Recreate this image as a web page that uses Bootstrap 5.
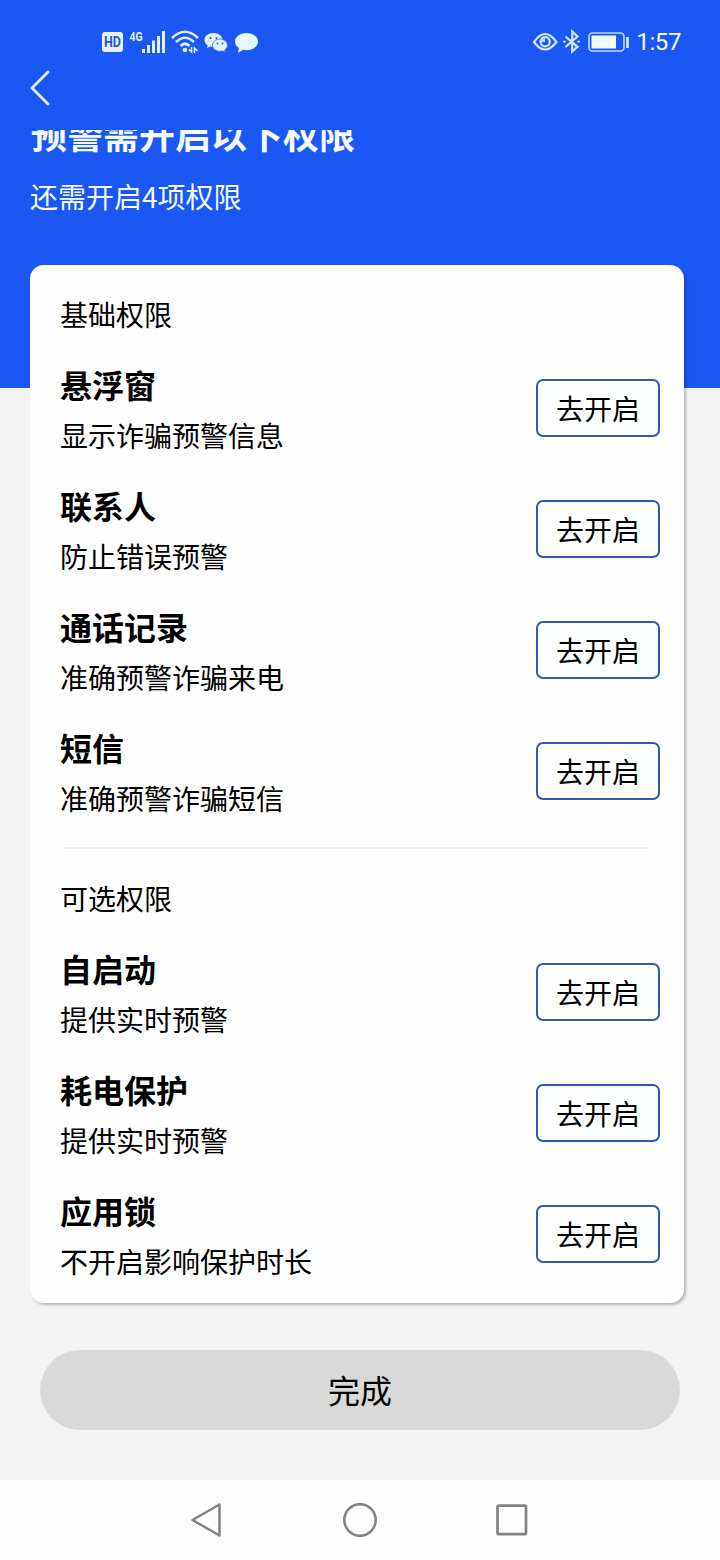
<!DOCTYPE html>
<html lang="zh-CN">
<head>
<meta charset="utf-8">
<meta name="viewport" content="width=device-width, initial-scale=1">
<title>预警权限</title>
<link href="https://cdn.jsdelivr.net/npm/bootstrap@5.3.0/dist/css/bootstrap.min.css" rel="stylesheet">
<style>
  body { font-family: "Noto Sans CJK SC", sans-serif; background: #f3f3f4; color: #000; width: 720px; height: 1560px; }
  .hero { background: #1b57f5; height: 388px; color: #f4fcff; }
  .status { height: 60px; padding: 30px 39px 0 101px; }
  .status svg { display: block; flex: none; overflow: visible; }
  .clock { font: 24px/25px Roboto, sans-serif; letter-spacing: -.4px; margin-left: 5px; }
  .back { height: 70px; padding: 9px 0 0 28px; }
  .back svg { display: block; }
  .headline-clip { height: 32px; margin-left: 31px; overflow: hidden; }
  .headline { font-size: 36px; line-height: 48px; font-weight: 700; margin: -21px 0 0; }
  .remaining { font-size: 28px; line-height: 42px; margin: 13px 0 0 30px; }
  .panel { margin: -123px 36px 0 30px; height: 1038px; padding: 28px 24px 8px 30px; border: 0; border-radius: 14px; box-shadow: 2px 2px 3px rgba(0,0,0,.25); background: #fefefe; }
  .group-name { font-size: 28px; line-height: 42px; margin: 0 0 13px; }
  .perm { height: 121px; }
  .perm-text { padding-top: 12px; }
  .perm h2 { font-size: 32px; line-height: 48px; font-weight: 700; margin: 0 0 6px; }
  .perm p { font-size: 28px; line-height: 42px; margin: 0; }
  .btn-open { width: 124px; height: 58px; margin-top: 31px; padding: 0; border: 2px solid #3559ae; border-radius: 7px; background: #fdffff; color: #000; font-size: 28px; line-height: 55px; }
  .rule { height: 2px; margin: 15px 12px 28px 4px; background: #f0f0f0; }
  .btn-done { margin: 47px 40px 0; height: 80px; border: 0; border-radius: 40px; background: #d9d9d9; color: #000; font-size: 32px; line-height: 78px; padding: 0 0 2px; }
  .sysnav { margin-top: 50px; height: 80px; background: #fdfdfd; padding-left: 189px; gap: 116px; }
</style>
</head>
<body class="d-flex flex-column overflow-hidden">
<header class="hero flex-shrink-0">
  <div class="status d-flex">
    <svg width="27" height="24"><rect x="1" y="2" width="21" height="20" rx="3" fill="#e4f3ff"/><text x="11.5" y="17.2" text-anchor="middle" font-family="Roboto" font-weight="700" font-size="14" textLength="17" lengthAdjust="spacingAndGlyphs" fill="#2b56c8">HD</text></svg>
    <svg width="41" height="24" fill="#dff1ff"><text x="1.5" y="10.500" font-family="Roboto" font-weight="700" font-size="13" textLength="13" lengthAdjust="spacingAndGlyphs">4G</text><path d="M14 19h3v4h-3zM19 15h3v8h-3zM24 10.500h3v12.500h-3zM29 6h3v17h-3zM34 1h3v22h-3z"/></svg>
    <svg width="34" height="24" fill="none" stroke="#dff1ff" stroke-width="2.600"><path d="M3 8Q16-4.500 29 8M7 12Q16 3.500 25 12M11.500 16Q16 11.500 20.500 16"/><circle cx="16" cy="20" r="2.300" fill="#dff1ff" stroke="none"/><path d="M20 19.500l2.500 2.500V17M25.500 23v-5l3 3" stroke-width="1.500"/></svg>
    <svg width="29" height="24"><path d="M10.500 3C5.300 3 1.500 6 1.500 10c0 2.300 1.200 4 3.200 5.300L4 18l3.200-1.500 3.300.5c5 0 9-3 9-7s-4-7-9-7z" fill="#e4f3ff"/><path d="M17 9c-4.200 0-7.500 2.700-7.500 6.200s3.300 6.100 7.500 6.100l2.600-.4 2.700 1.400-.6-2.300c1.800-1.200 2.800-2.800 2.800-4.800C24.500 11.700 21.200 9 17 9z" fill="#e4f3ff" stroke="#1b57f5" stroke-width=".7"/><g fill="#1b57f5"><circle cx="7.500" cy="8" r="1.100"/><circle cx="13.500" cy="8" r="1.100"/><circle cx="14.500" cy="13.500" r=".9"/><circle cx="19.500" cy="13.500" r=".9"/></g></svg>
    <svg width="28" height="24" fill="#e4f8ff"><path d="M14.500 3C8 3 3 6.800 3 11.600c0 2.600 1.500 5 3.900 6.500L6 22.700l5.300-2.900 3.200.4c6.400 0 11.500-3.800 11.500-8.600S20.900 3 14.500 3z"/></svg>
    <svg class="ms-auto" width="31" height="24" fill="none" stroke="#cfeaff" stroke-width="2.200"><path d="M2 12Q13-4 24.500 12Q13 27 2 12z"/><circle cx="13.200" cy="11.800" r="4.600"/><path d="M13 12V8.500A3.500 3.500 0 0 0 9.500 12z" fill="#cfeaff" stroke="none"/></svg>
    <svg width="23" height="24" fill="none" stroke="#cfeaff" stroke-width="2.200"><path d="M2.500 6.500l12 10.300-5.300 4.700V1.500l5.300 5L2.500 17"/><path d="M0 11.700h2.500M14.500 11.700H17" stroke-width="1.800"/></svg>
    <svg width="45" height="24"><rect x="3" y="3" width="35" height="18" rx="3.500" fill="none" stroke="#b8dbff" stroke-width="1.600"/><rect x="5.500" y="5.500" width="24.500" height="13" fill="#eefaff"/><path d="M41.500 7v11" stroke="#dff1ff" stroke-width="2.600"/></svg>
    <span class="clock">1:57</span>
  </div>
  <div class="back"><svg width="24" height="38" fill="none" stroke="#e4f7ff" stroke-width="2.600" stroke-linecap="round" stroke-linejoin="round"><path d="M20 3L4 19l16 16"/></svg></div>
  <div class="headline-clip"><h1 class="headline text-nowrap">预警需开启以下权限</h1></div>
  <p class="remaining">还需开启4项权限</p>
</header>
<main class="card panel flex-shrink-0">
  <p class="group-name">基础权限</p>
  <section class="perm d-flex justify-content-between align-items-start"><div class="perm-text"><h2>悬浮窗</h2><p>显示诈骗预警信息</p></div><button class="btn btn-open">去开启</button></section>
  <section class="perm d-flex justify-content-between align-items-start"><div class="perm-text"><h2>联系人</h2><p>防止错误预警</p></div><button class="btn btn-open">去开启</button></section>
  <section class="perm d-flex justify-content-between align-items-start"><div class="perm-text"><h2>通话记录</h2><p>准确预警诈骗来电</p></div><button class="btn btn-open">去开启</button></section>
  <section class="perm d-flex justify-content-between align-items-start"><div class="perm-text"><h2>短信</h2><p>准确预警诈骗短信</p></div><button class="btn btn-open">去开启</button></section>
  <div class="rule"></div>
  <p class="group-name">可选权限</p>
  <section class="perm d-flex justify-content-between align-items-start"><div class="perm-text"><h2>自启动</h2><p>提供实时预警</p></div><button class="btn btn-open">去开启</button></section>
  <section class="perm d-flex justify-content-between align-items-start"><div class="perm-text"><h2>耗电保护</h2><p>提供实时预警</p></div><button class="btn btn-open">去开启</button></section>
  <section class="perm d-flex justify-content-between align-items-start"><div class="perm-text"><h2>应用锁</h2><p>不开启影响保护时长</p></div><button class="btn btn-open">去开启</button></section>
</main>
<button class="btn btn-done flex-shrink-0">完成</button>
<nav class="sysnav d-flex align-items-center flex-shrink-0">
  <svg width="36" height="36" fill="none" stroke="#828282" stroke-width="2.500" stroke-linejoin="round"><path d="M30.500 2.500v31L3.500 18z"/></svg>
  <svg width="36" height="36" fill="none" stroke="#828282" stroke-width="2.500"><circle cx="19" cy="18" r="15.700"/></svg>
  <svg width="36" height="36" fill="none" stroke="#828282" stroke-width="2.700"><rect x="4.500" y="3.700" width="28.500" height="28.500" rx="1.500"/></svg>
</nav>
<script src="https://cdn.jsdelivr.net/npm/bootstrap@5.3.0/dist/js/bootstrap.bundle.min.js"></script>
</body>
</html>
